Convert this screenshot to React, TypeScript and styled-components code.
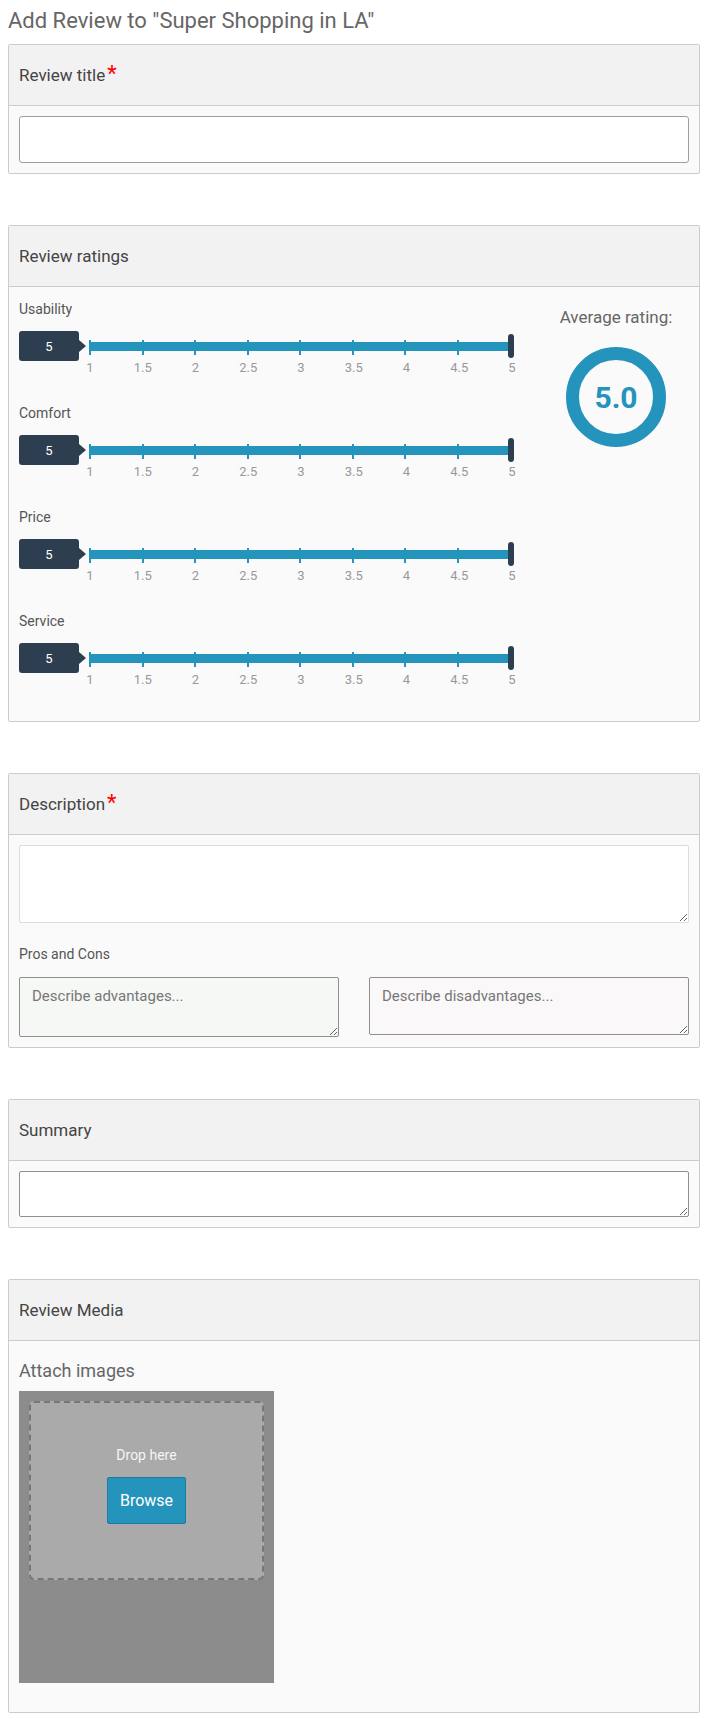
import React from 'react'
import styled, { createGlobalStyle } from 'styled-components'

const BLUE = '#2494bc'
const NAVY = '#2c3e50'

const GlobalStyle = createGlobalStyle`
  * { box-sizing: border-box; }
  body {
    margin: 8px;
    background: #fff;
    font-family: Roboto, "Liberation Sans", sans-serif;
  }
`

const Title = styled.h1`
  margin: 0 0 10px;
  font-size: 22px;
  line-height: 26px;
  font-weight: 400;
  color: #666;
`

const Stack = styled.div`
  display: flex;
  flex-direction: column;
  gap: 51px;
`

const Panel = styled.section`
  border: 1px solid #ccc;
  border-radius: 2px;
  background: #fafafa;
`

const PanelHead = styled.div`
  height: 61px;
  padding: 0 10px;
  background: #f2f2f2;
  border-bottom: 1px solid #ccc;
  font-size: 17px;
  line-height: 60px;
  color: #444;
`

const Required = styled.span`
  margin-left: 2px;
  font-size: 22px;
  line-height: 22px;
  color: #f00;
`

const PanelBody = styled.div<{ $pad?: string }>`
  padding: ${p => p.$pad || '10px'};
`

const TextInput = styled.input`
  display: block;
  width: 100%;
  height: 47px;
  border: 1px solid #9e9e9e;
  border-radius: 3px;
  background: #fff;
`

const TextArea = styled.textarea<{ $h: number; $bg?: string; $border?: string }>`
  display: block;
  width: 100%;
  height: ${p => p.$h}px;
  padding: 9px 12px;
  border: 1px solid ${p => p.$border || '#8f8f8f'};
  border-radius: 2px;
  background: ${p => p.$bg || '#fff'};
  font-family: Roboto, "Liberation Sans", sans-serif;
  font-size: 15px;
  line-height: 18px;
  color: #333;
  resize: vertical;
  &::placeholder { color: #777; }
`

/* ratings */
const RatingsBody = styled.div`
  display: flex;
  justify-content: space-between;
  padding: 12px 10px 33px;
`

const SliderList = styled.div`
  display: flex;
  flex-direction: column;
  gap: 27px;
`

const SmallLabel = styled.div<{ $mt?: number; $mb: number }>`
  font-size: 14px;
  line-height: 20px;
  color: #555;
  margin-top: ${p => p.$mt || 0}px;
  margin-bottom: ${p => p.$mb}px;
`

const SliderRow = styled.div`
  display: flex;
  align-items: center;
  height: 30px;
`

const Badge = styled.div`
  position: relative;
  width: 60px;
  height: 30px;
  margin-right: 10px;
  border-radius: 3px;
  background: ${NAVY};
  color: #fff;
  font-size: 13px;
  display: flex;
  align-items: center;
  justify-content: center;
  &::after {
    content: '';
    position: absolute;
    right: -7px;
    top: 50%;
    transform: translateY(-50%);
    border-left: 7px solid ${NAVY};
    border-top: 6px solid transparent;
    border-bottom: 6px solid transparent;
  }
`

const Track = styled.div`
  position: relative;
  width: 422px;
  height: 9px;
  background: ${BLUE};
`

const Ticks = styled.div`
  position: absolute;
  left: 0;
  right: 0;
  top: -2px;
  height: 15px;
  display: flex;
  justify-content: space-between;
`

const Tick = styled.span`
  width: 2px;
  background: ${BLUE};
`

const Handle = styled.span`
  position: absolute;
  right: -3px;
  top: 50%;
  transform: translateY(-50%);
  width: 6px;
  height: 24px;
  border-radius: 3px;
  background: ${NAVY};
`

const TickLabels = styled.div`
  display: flex;
  justify-content: space-between;
  width: 422px;
  margin: -1px 0 0 71px;
`

const TickLabel = styled.span`
  width: 0;
  display: flex;
  justify-content: center;
  white-space: nowrap;
  font-size: 13px;
  line-height: 16px;
  color: #999;
`

const AverageBox = styled.div`
  width: 146px;
  padding-top: 8px;
  display: flex;
  flex-direction: column;
  align-items: center;
`

const AverageLabel = styled.div`
  font-size: 17px;
  line-height: 20px;
  color: #666;
  white-space: nowrap;
`

const Ring = styled.div`
  margin-top: 20px;
  width: 100px;
  height: 100px;
  border: 13px solid ${BLUE};
  border-radius: 50%;
  display: flex;
  align-items: center;
  justify-content: center;
  font-size: 30px;
  font-weight: 700;
  color: ${BLUE};
`

/* description */
const ProsCons = styled.div`
  display: grid;
  grid-template-columns: 1fr 1fr;
  gap: 30px;
  align-items: start;
`

/* media */
const AttachLabel = styled.div`
  font-size: 18px;
  line-height: 22px;
  color: #666;
  margin-bottom: 9px;
`

const DropBox = styled.div`
  width: 255px;
  height: 292px;
  padding: 10px;
  background: #8c8c8c;
`

const DropZone = styled.div`
  height: 179px;
  padding-top: 44px;
  border: 2px dashed #777;
  border-radius: 5px;
  background: #aaa;
  display: flex;
  flex-direction: column;
  align-items: center;
`

const DropText = styled.div`
  font-size: 14px;
  line-height: 17px;
  color: #f5f5f5;
`

const BrowseButton = styled.button`
  margin-top: 13px;
  width: 79px;
  height: 47px;
  border: 1px solid #1b7ba1;
  border-radius: 2px;
  background: ${BLUE};
  color: #fff;
  font-family: Roboto, "Liberation Sans", sans-serif;
  font-size: 16px;
`

const steps = ['1', '1.5', '2', '2.5', '3', '3.5', '4', '4.5', '5']
const criteria = ['Usability', 'Comfort', 'Price', 'Service']

const RatingSlider: React.FC<{ label: string; value: number }> = ({ label, value }) => (
  <div>
    <SmallLabel $mb={12}>{label}</SmallLabel>
    <SliderRow>
      <Badge>{value}</Badge>
      <Track>
        <Ticks>
          {steps.map(s => <Tick key={s} />)}
        </Ticks>
        <Handle />
      </Track>
    </SliderRow>
    <TickLabels>
      {steps.map(s => <TickLabel key={s}>{s}</TickLabel>)}
    </TickLabels>
  </div>
)

export default function App() {
  return (
    <>
      <GlobalStyle />
      <Title>Add Review to "Super Shopping in LA"</Title>
      <Stack>
        <Panel>
          <PanelHead>Review title<Required>*</Required></PanelHead>
          <PanelBody>
            <TextInput type="text" />
          </PanelBody>
        </Panel>

        <Panel>
          <PanelHead>Review ratings</PanelHead>
          <RatingsBody>
            <SliderList>
              {criteria.map(c => <RatingSlider key={c} label={c} value={5} />)}
            </SliderList>
            <AverageBox>
              <AverageLabel>Average rating:</AverageLabel>
              <Ring>5.0</Ring>
            </AverageBox>
          </RatingsBody>
        </Panel>

        <Panel>
          <PanelHead>Description<Required>*</Required></PanelHead>
          <PanelBody>
            <TextArea $h={78} $border="#ddd" />
            <SmallLabel $mt={21} $mb={13}>Pros and Cons</SmallLabel>
            <ProsCons>
              <TextArea $h={60} $bg="#f6f8f5" placeholder="Describe advantages..." />
              <TextArea $h={58} $bg="#faf8f9" placeholder="Describe disadvantages..." />
            </ProsCons>
          </PanelBody>
        </Panel>

        <Panel>
          <PanelHead>Summary</PanelHead>
          <PanelBody>
            <TextArea $h={46} />
          </PanelBody>
        </Panel>

        <Panel>
          <PanelHead>Review Media</PanelHead>
          <PanelBody $pad="19px 10px 29px">
            <AttachLabel>Attach images</AttachLabel>
            <DropBox>
              <DropZone>
                <DropText>Drop here</DropText>
                <BrowseButton>Browse</BrowseButton>
              </DropZone>
            </DropBox>
          </PanelBody>
        </Panel>
      </Stack>
    </>
  )
}
